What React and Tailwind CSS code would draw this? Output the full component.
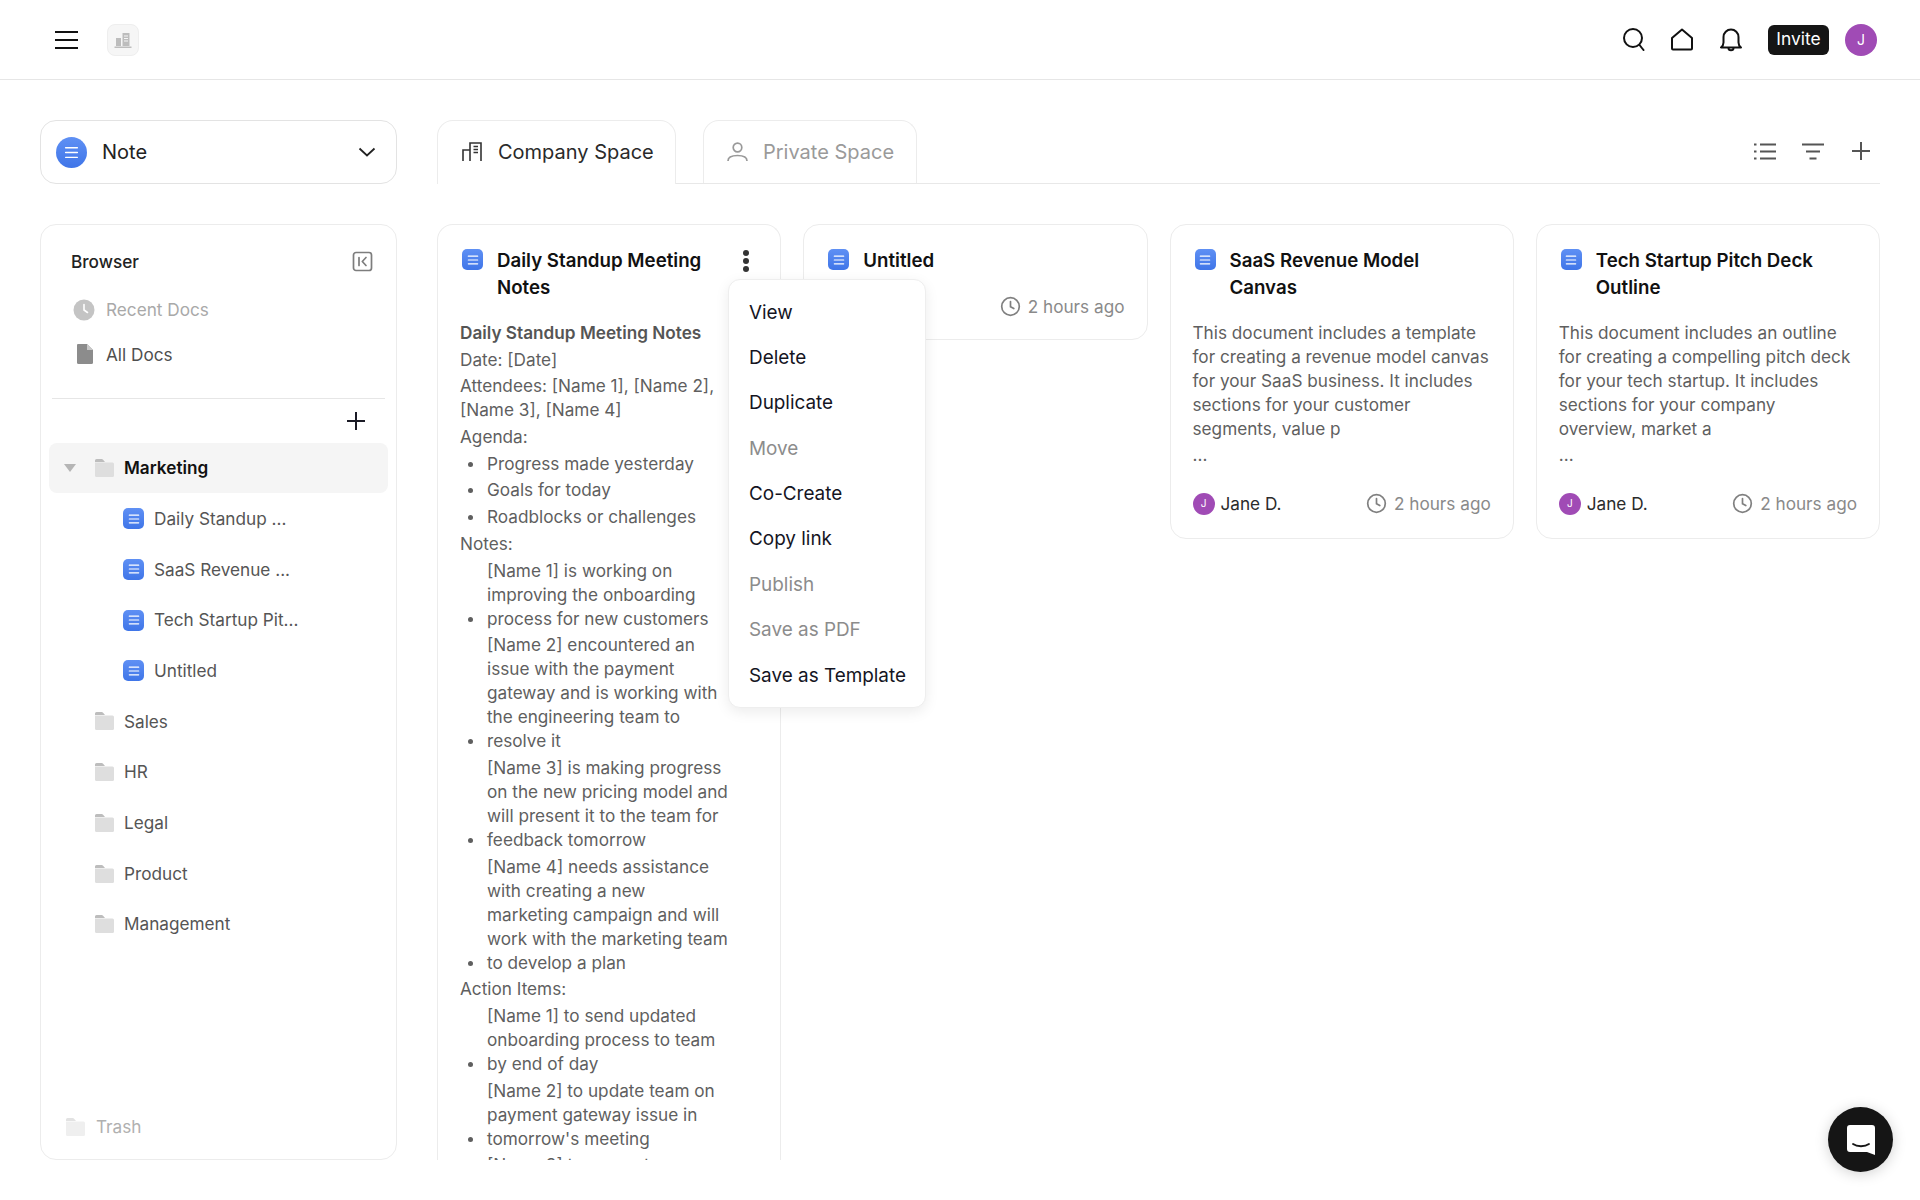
import { useState } from 'react';

const menuItems = [
  { label: 'View' },
  { label: 'Delete' },
  { label: 'Duplicate' },
  { label: 'Move', off: true },
  { label: 'Co-Create' },
  { label: 'Copy link' },
  { label: 'Publish', off: true },
  { label: 'Save as PDF', off: true },
  { label: 'Save as Template' },
];

const marketingDocs = ['Daily Standup ...', 'SaaS Revenue ...', 'Tech Startup Pit...', 'Untitled'];
const otherFolders = ['Sales', 'HR', 'Legal', 'Product', 'Management'];

const agenda = ['Progress made yesterday', 'Goals for today', 'Roadblocks or challenges'];

const notes = [
  ['[Name 1] is working on', 'improving the onboarding', 'process for new customers'],
  ['[Name 2] encountered an', 'issue with the payment', 'gateway and is working with', 'the engineering team to', 'resolve it'],
  ['[Name 3] is making progress', 'on the new pricing model and', 'will present it to the team for', 'feedback tomorrow'],
  ['[Name 4] needs assistance', 'with creating a new', 'marketing campaign and will', 'work with the marketing team', 'to develop a plan'],
];

const actions = [
  ['[Name 1] to send updated', 'onboarding process to team', 'by end of day'],
  ['[Name 2] to update team on', 'payment gateway issue in', "tomorrow's meeting"],
  ['[Name 3] to request'],
];

function DocLines({ size }) {
  return (
    <svg width={size} height={size} viewBox="0 0 14 14" stroke="#fff" strokeWidth="1.300" strokeLinecap="round">
      <path d="M1.500 2.500h11M1.500 7h11M1.500 11.500h11" />
    </svg>
  );
}

function DocIcon() {
  return (
    <span className="flex h-[21px] w-[21px] shrink-0 items-center justify-center rounded-[5px] bg-gradient-to-b from-[#5f90f4] to-[#3f75e8]">
      <DocLines size={12} />
    </span>
  );
}

function FolderIcon({ light }) {
  return (
    <svg width="21" height="20" viewBox="0 0 21 20" className="shrink-0">
      <path d="M1 2.500A1.500 1.500 0 0 1 2.500 1h5.200c.6 0 1 .3 1.400.8L11 4H1z" fill={light ? '#e2e2e2' : '#bdbdbd'} />
      <path d="M1 4.500h17.500A1.500 1.500 0 0 1 20 6v11.500a1.500 1.500 0 0 1-1.500 1.500h-16A1.500 1.500 0 0 1 1 17.500z" fill={light ? '#efefef' : '#dedede'} />
    </svg>
  );
}

function ClockIcon() {
  return (
    <svg width="21" height="21" viewBox="0 0 21 21" fill="none" stroke="#808080" strokeWidth="1.700" strokeLinecap="round" className="shrink-0">
      <circle cx="10.500" cy="10.500" r="8.800" />
      <path d="M10.500 5.500v5.200l3.300 1.800" />
    </svg>
  );
}

function ListLine({ children }) {
  return (
    <div className="relative pl-[27px]">
      <span className="absolute left-[8px] top-[10px] h-[5px] w-[5px] rounded-full bg-[#5f5f5f]" />
      {children}
    </div>
  );
}

function NoteItem({ lines }) {
  const last = lines.length - 1;
  return (
    <div>
      {lines.slice(0, last).map((l) => (
        <div key={l} className="whitespace-nowrap pl-[27px]">{l}</div>
      ))}
      <ListLine>{lines[last]}</ListLine>
    </div>
  );
}

function CardFooter({ author }) {
  return (
    <div className="flex items-center justify-between">
      {author && (
        <div className="flex items-center gap-[6px]">
          <span className="flex h-[22px] w-[22px] items-center justify-center rounded-full bg-[#a04bb5] text-[10px] text-white">J</span>
          <span className="text-[17.200px] text-[#2b2b2b]">Jane D.</span>
        </div>
      )}
      <div className="ml-auto flex items-center gap-[7px] text-[17.200px] text-[#8a8a8a]">
        <ClockIcon />
        2 hours ago
      </div>
    </div>
  );
}

function CardTitle({ children }) {
  return (
    <div className="flex gap-[14px] pr-[24px] pl-[2px]">
      <span className="mt-[2px]"><DocIcon /></span>
      <h3 className="text-[18.700px] leading-[27px] font-semibold text-[#111]">{children}</h3>
    </div>
  );
}

function SummaryCard({ title, lines }) {
  return (
    <div className="h-[315px] rounded-2xl border border-[#ececec] bg-white px-[22px] pt-[22px]">
      <CardTitle>{title}</CardTitle>
      <div className="mt-[20px] text-[17.200px] leading-6 text-[#5f5f5f]">
        {lines.map((l) => (
          <div key={l} className="whitespace-nowrap">{l}</div>
        ))}
        <div className="mt-[2px]">...</div>
      </div>
      <div className="mt-[24px]">
        <CardFooter author />
      </div>
    </div>
  );
}

function Sidebar() {
  return (
    <aside className="flex h-[936px] flex-col rounded-2xl border border-[#ececec] bg-white px-2 pt-[24px] pb-[19px]">
      <div className="flex items-center justify-between pr-[15px] pl-[22px]">
        <span className="text-[17.200px] font-medium text-[#222]">Browser</span>
        <svg width="21" height="21" viewBox="0 0 21 21" fill="none" stroke="#7d7d7d" strokeWidth="1.700" strokeLinecap="round" strokeLinejoin="round">
          <rect x="1.500" y="1.500" width="18" height="18" rx="2.500" />
          <path d="M7 6.500v8M14 6.500l-3.700 4 3.700 4" />
        </svg>
      </div>

      <div className="mt-[22px] flex items-center gap-[11px] pl-[24px] text-[17.200px] text-[#a9a9a9]">
        <svg width="22" height="22" viewBox="0 0 22 22" className="shrink-0">
          <circle cx="11" cy="11" r="10.500" fill="#c4c4c4" />
          <path d="M11 5.500V11l3.500 2.500" stroke="#fff" strokeWidth="1.600" fill="none" strokeLinecap="round" />
        </svg>
        Recent Docs
      </div>
      <div className="mt-[19px] flex items-center gap-[12px] pl-[27px] text-[17.200px] text-[#4f4f4f]">
        <svg width="18" height="20" viewBox="0 0 18 20" className="shrink-0">
          <path d="M2 0h9l6 6v12.500a1.500 1.500 0 0 1-1.500 1.500h-13A1.500 1.500 0 0 1 1 18.500V1a1 1 0 0 1 1-1z" fill="#8c8c8c" />
          <path d="M11 0v6h6z" fill="#c9c9c9" />
        </svg>
        All Docs
      </div>

      <div className="mt-[31px] mx-[3px] border-t border-[#e6e6e6]" />
      <div className="flex h-[44px] items-center justify-end pr-[22px]">
        <svg width="20" height="20" viewBox="0 0 20 20" stroke="#1b1b26" strokeWidth="2">
          <path d="M10 1v18M1 10h18" />
        </svg>
      </div>

      <div className="flex h-[50px] items-center rounded-lg bg-[#f5f5f5] pl-[15px] text-[17.200px] font-semibold text-[#111]">
        <svg width="12" height="8" viewBox="0 0 12 8" className="mr-[18px] shrink-0">
          <path d="M0 0h12L6 8z" fill="#b5b5b5" />
        </svg>
        <span className="mr-[9px]"><FolderIcon /></span>
        Marketing
      </div>

      {marketingDocs.map((d) => (
        <div key={d} className="flex h-[50.700px] items-center gap-[10px] pl-[74px] text-[17.200px] text-[#555]">
          <DocIcon />
          {d}
        </div>
      ))}
      {otherFolders.map((f) => (
        <div key={f} className="flex h-[50.700px] items-center gap-[9px] pl-[45px] text-[17.200px] text-[#555]">
          <FolderIcon />
          {f}
        </div>
      ))}

      <div className="mt-auto flex items-center gap-[10px] pl-[16px] text-[17.200px] text-[#b0b0b0]">
        <FolderIcon light />
        Trash
      </div>
    </aside>
  );
}

function OpenCard() {
  return (
    <div className="relative h-[936px]">
      <div className="h-full overflow-hidden rounded-t-2xl border-x border-t border-[#ececec] bg-white px-[22px] pt-[22px]">
        <div className="flex justify-between">
          <CardTitle>Daily Standup Meeting Notes</CardTitle>
          <svg width="8" height="22" viewBox="0 0 8 22" fill="#333" className="mt-[3px] mr-[8px] shrink-0">
            <circle cx="4" cy="3" r="3" />
            <circle cx="4" cy="11" r="3" />
            <circle cx="4" cy="19" r="3" />
          </svg>
        </div>
        <div className="mt-[20px] flex flex-col gap-[2.700px] text-[17.200px] leading-6 text-[#5f5f5f]">
          <div className="font-semibold text-[#555]">Daily Standup Meeting Notes</div>
          <div>Date: [Date]</div>
          <div className="whitespace-nowrap">Attendees: [Name 1], [Name 2],<br />[Name 3], [Name 4]</div>
          <div>Agenda:</div>
          {agenda.map((a) => <ListLine key={a}>{a}</ListLine>)}
          <div>Notes:</div>
          {notes.map((n) => <NoteItem key={n[0]} lines={n} />)}
          <div>Action Items:</div>
          {actions.map((n) => <NoteItem key={n[0]} lines={n} />)}
        </div>
      </div>

      <div className="absolute top-[55px] left-[291px] z-10 w-[198px] rounded-xl border border-[#eeeeee] bg-white pt-[10px] pb-[8px] pl-[20px] shadow-[0_4px_14px_rgba(0,0,0,0.08)]">
        {menuItems.map((m) => (
          <div key={m.label} className={`flex h-[45.400px] items-center text-[18.900px] ${m.off ? 'text-[#8c8c8c]' : 'text-[#15151f]'}`}>
            {m.label}
          </div>
        ))}
      </div>
    </div>
  );
}

export default function App() {
  const [space] = useState('company');

  return (
    <div className="relative h-[1200px] w-full overflow-hidden bg-white font-['Inter',sans-serif]">
      <header className="flex h-20 items-center justify-between border-b border-[#e6e6e6] pr-[43px] pl-[55px]">
        <div className="flex items-center gap-[29px]">
          <svg width="23" height="20" viewBox="0 0 23 20" stroke="#111" strokeWidth="2.200">
            <path d="M0 2h23M0 10h23M0 18h23" />
          </svg>
          <span className="flex h-8 w-8 items-center justify-center rounded-lg border border-[#eeeeee] bg-[#f6f6f6]">
            <svg width="18" height="16" viewBox="0 0 18 16">
              <path d="M2 6h5v8H2zM8.500 1h7v13h-7z" fill="#bdbdbd" />
              <path d="M10 4h4M10 6.500h4M10 9h4" stroke="#f6f6f6" strokeWidth="1" />
              <path d="M0.500 14.500h17V16h-17z" fill="#bdbdbd" />
            </svg>
          </span>
        </div>
        <div className="flex items-center">
          <svg width="22" height="23" viewBox="0 0 22 23" fill="none" stroke="#111" strokeWidth="2" strokeLinecap="round" className="ml-[1px]">
            <circle cx="10" cy="10" r="9" />
            <path d="M16.500 17l4 5" />
          </svg>
          <svg width="22" height="23" viewBox="0 0 22 23" fill="none" stroke="#111" strokeWidth="2" strokeLinejoin="round" className="ml-[26px]">
            <path d="M11 1.500L21 10v10.500a1 1 0 0 1-1 1H2a1 1 0 0 1-1-1V10z" />
          </svg>
          <svg width="22" height="24" viewBox="0 0 22 24" fill="none" stroke="#111" strokeWidth="2" strokeLinejoin="round" className="ml-[27px]">
            <path d="M1 19.500h20c-1.500-1.200-2.500-2.500-2.500-5V9a7.500 7.500 0 0 0-15 0v5.500c0 2.500-1 3.800-2.500 5z" />
            <path d="M8.500 20c0 3 5 3 5 0" />
          </svg>
          <span className="ml-[26px] flex h-[30px] w-[61px] items-center justify-center rounded-md bg-[#151515] text-[17.400px] text-white">Invite</span>
          <span className="ml-4 flex h-8 w-8 items-center justify-center rounded-full bg-[#a04bb5] text-sm text-white">J</span>
        </div>
      </header>

      <main className="px-10 pt-10">
        <div className="grid grid-cols-[357px_1fr] gap-x-[40px]">
          <button className="flex h-16 items-center rounded-2xl border border-[#e3e3e3] bg-white pr-5 pl-[15px] text-left">
            <span className="flex h-[31px] w-[31px] items-center justify-center rounded-full bg-gradient-to-b from-[#5f90f4] to-[#3f75e8]">
              <DocLines size={15} />
            </span>
            <span className="ml-[15px] text-xl text-[#222]">Note</span>
            <svg width="18" height="10" viewBox="0 0 18 10" fill="none" stroke="#222" strokeWidth="1.800" className="ml-auto">
              <path d="M1.500 1.500L9 8.500l7.500-7" />
            </svg>
          </button>

          <div className="flex h-16 items-end justify-between border-b border-[#e8e8e8]">
            <div className="flex items-end gap-[27px]">
              <div className={`-mb-px flex h-16 w-[239px] items-center gap-[15px] rounded-t-2xl border-x border-t border-[#ececec] bg-white pb-px pl-6 text-xl ${space === 'company' ? 'text-[#2a2a2a]' : 'text-[#999]'}`}>
                <svg width="21" height="20" viewBox="0 0 21 20" fill="none" stroke="#333" strokeWidth="1.600">
                  <path d="M1 19V8h7v11M8 8V1h11v18M11.500 4.500h4.500M11.500 7.500h4.500M11.500 10.500h4.500" />
                </svg>
                Company Space
              </div>
              <div className="flex h-[63px] w-[214px] items-center gap-[15px] rounded-t-2xl border-x border-t border-[#ececec] bg-white pl-[23px] text-xl text-[#9a9a9a]">
                <svg width="21" height="20" viewBox="0 0 21 20" fill="none" stroke="#999" strokeWidth="1.700">
                  <circle cx="10.500" cy="5.500" r="4.300" />
                  <path d="M1 19c0-4 4-5.500 9.500-5.500S20 15 20 19" />
                </svg>
                Private Space
              </div>
            </div>
            <div className="mb-[23px] flex items-center pr-[10px]">
              <svg width="22" height="17" viewBox="0 0 22 17" stroke="#555" strokeWidth="2">
                <path d="M6 1.500h16M6 8.500h16M6 15.500h16M0 1.500h2.500M0 8.500h2.500M0 15.500h2.500" />
              </svg>
              <svg width="22" height="17" viewBox="0 0 22 17" stroke="#555" strokeWidth="2" className="ml-[26px]">
                <path d="M0 1.500h22M4 8.500h14M7.500 15.500h7" />
              </svg>
              <svg width="18" height="18" viewBox="0 0 18 18" stroke="#555" strokeWidth="2" className="ml-[28px]">
                <path d="M9 0v18M0 9h18" />
              </svg>
            </div>
          </div>

          <div className="mt-10"><Sidebar /></div>

          <div className="mt-10 grid grid-cols-4 items-start gap-x-[22px]">
            <OpenCard />
            <div className="h-[116px] rounded-2xl border border-[#ececec] bg-white px-[22px] pt-[22px]">
              <CardTitle>Untitled</CardTitle>
              <div className="mt-[20px]"><CardFooter /></div>
            </div>
            <SummaryCard
              title="SaaS Revenue Model Canvas"
              lines={['This document includes a template', 'for creating a revenue model canvas', 'for your SaaS business. It includes', 'sections for your customer', 'segments, value p']}
            />
            <SummaryCard
              title="Tech Startup Pitch Deck Outline"
              lines={['This document includes an outline', 'for creating a compelling pitch deck', 'for your tech startup. It includes', 'sections for your company', 'overview, market a']}
            />
          </div>
        </div>
      </main>

      <button className="absolute right-[27px] bottom-[28px] flex h-[65px] w-[65px] items-center justify-center rounded-full bg-[#151515] shadow-[0_2px_14px_rgba(0,0,0,0.18)]">
        <svg width="30" height="32" viewBox="0 0 30 32">
          <path d="M4 1h22a3 3 0 0 1 3 3v27l-8-3H4a3 3 0 0 1-3-3V4a3 3 0 0 1 3-3z" fill="#fff" />
          <path d="M7 20c4 3 12 3 16 0" fill="none" stroke="#151515" strokeWidth="1.800" strokeLinecap="round" />
        </svg>
      </button>
    </div>
  );
}
